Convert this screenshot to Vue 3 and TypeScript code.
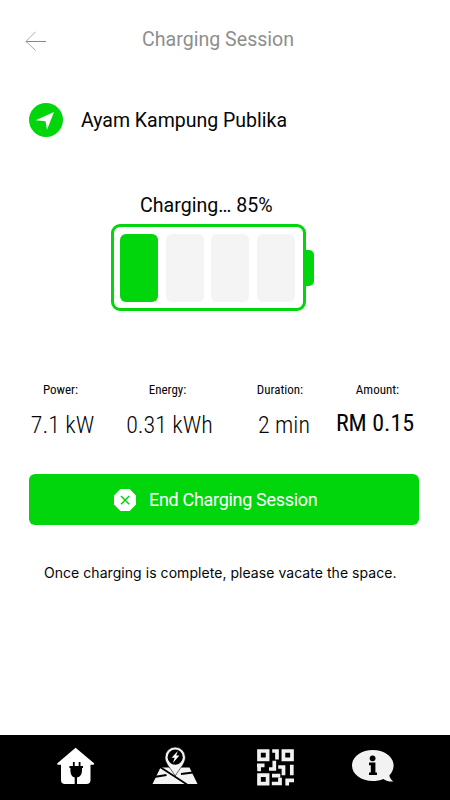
<script setup lang="ts">
interface Metric {
  id: string
  label: string
  value: string
}

const metrics: Metric[] = [
  { id: 'power', label: 'Power:', value: '7.1 kW' },
  { id: 'energy', label: 'Energy:', value: '0.31 kWh' },
  { id: 'duration', label: 'Duration:', value: '2 min' },
  { id: 'amount', label: 'Amount:', value: 'RM 0.15' },
]
const cells: boolean[] = [true, false, false, false]
</script>

<template>
  <div class="screen">
    <header class="header">
      <button class="back" aria-label="Back">
        <svg width="22" height="20" viewBox="0 0 22 20">
          <path d="M10.5 .8 1 10.4l9.5 9" fill="none" stroke="#aaa" stroke-width="1" />
          <path d="M1 10.5h20" stroke="#888" stroke-width="1" />
        </svg>
      </button>
      <h1 class="title">Charging Session</h1>
    </header>

    <section class="location">
      <svg width="34" height="34" viewBox="0 0 34 34">
        <circle cx="17" cy="17" r="17" fill="#00d60b" />
        <path d="M25 9 6.7 17.2l9.8 1 1.5 8.6Z" fill="#fff" />
      </svg>
      <span class="place">Ayam Kampung Publika</span>
    </section>

    <section class="status">
      <p class="percent">Charging… 85%</p>
      <div class="battery">
        <div class="shell">
          <span v-for="(on, i) in cells" :key="i" class="cell" :class="{ on }"></span>
        </div>
        <span class="tip"></span>
      </div>
    </section>

    <section class="metrics">
      <div v-for="m in metrics" :key="m.id" class="metric" :class="m.id">
        <span class="label">{{ m.label }}</span>
        <span class="value">{{ m.value }}</span>
      </div>
    </section>

    <button class="end">
      <svg width="22" height="22" viewBox="0 0 22 22">
        <path d="M6.4 0h9.2L22 6.4v9.2L15.6 22H6.4L0 15.6V6.4Z" fill="#fff" />
        <path d="m7 7 8.2 8.2M15.2 7 7 15.2" stroke="#00d60b" stroke-width="1.5" />
      </svg>
      <span class="end-text">End Charging Session</span>
    </button>

    <p class="notice">Once charging is complete, please vacate the space.</p>

    <nav class="nav">
      <svg class="home" width="38" height="38" viewBox="0 0 38 38">
        <path d="M18.6.8 37 16.3q.8 1.5-1 1.5h-2.5V33q0 4-4 4H20v-6.5q5-1 5-7V21h1v-2h-2.5v-4h-1.8v4h-4v-4h-1.8v4h-3.5v2h1v2.5q0 6 4.3 7V37H8q-4 0-4-4V17.8H1.4q-1.8 0-1-1.5Z" fill="#fff" />
      </svg>
      <svg class="map" width="46" height="38" viewBox="0 0 46 38">
        <path d="M8.5 20.5h29L45.5 37H.5Z" fill="#f4f4f4" />
        <path d="m8 20 15.5 10L35 37.5M2 30l12.5-2M29 27l12-1.5" fill="none" stroke="#000" stroke-width="1.8" />
        <path d="M23.2 29C19.5 22 13 17 13 10.3a10.2 10.2 0 0 1 20.4 0C33.4 17 27 22 23.2 29Z" fill="#f4f4f4" stroke="#000" stroke-width="0.6" />
        <circle cx="23.2" cy="10.2" r="7.6" />
        <path d="m25.8 4-6.2 6.8h3.1L20.9 16l6.5-7.4h-3.2Z" fill="#fff" />
      </svg>
      <svg class="qr" width="37" height="37" viewBox="0 0 37 37">
        <g fill="none" stroke="#f2f2f2" stroke-width="3.7">
          <path d="M2 2h8.6v8.4H2ZM26.4 2H35v8.4h-8.6ZM2 26.2h8.6v8.4H2Z" />
          <path d="M15.2 2H20v8.4M0 16.3h7.5M2.1 14.5v7.7M12 20h5.3v-8.3M21.2 18h5.3v8.2M34.8 15.8v10.4M15 26.6h8.3M14.8 34.5H23v-5.7M28.4 31.3H37M30.2 29.5v7" />
        </g>
      </svg>
      <svg class="info" width="42" height="34" viewBox="0 0 42 34">
        <path d="M20.8 0c11.5 0 20.8 6.7 20.8 15.5 0 3.8-1.6 7.2-4.2 9.8 0 2.3 1.8 4.6 4 6.2-4 .2-7.7-.8-10.2-2.6-3.1 1.4-6.4 2.1-10.4 2.1C9.3 31 0 24.3 0 15.5S9.3 0 20.8 0Z" fill="#f2f2f2" />
        <circle cx="20.6" cy="8.3" r="2.9" />
        <path d="M17 12.6h6.4v9.8H25v2.7h-8v-2.7h1.8v-7.1H17Z" />
      </svg>
    </nav>
  </div>
</template>

<style>
body {
  margin: 0;
  background: #fff;
}
</style>

<style scoped>
.screen {
  display: flex;
  flex-direction: column;
  box-sizing: border-box;
  width: 450px;
  height: 800px;
  overflow: hidden;
  background: #fff;
  color: #050505;
  font-family: Roboto, "Liberation Sans", sans-serif;
}
svg {
  display: block;
  flex: none;
}
button {
  border: 0;
  padding: 0;
  background: none;
  font-family: inherit;
}
.header {
  display: flex;
  align-items: center;
  height: 79px;
  padding-left: 25px;
}
.back {
  width: 22px;
  padding-top: 3px;
}
.title {
  margin: 1px 0 0 95px;
  color: #8e8e8e;
  font-size: 19.6px;
  font-weight: 400;
  line-height: 24px;
}
.location {
  display: flex;
  align-items: center;
  gap: 18px;
  height: 34px;
  margin: 24px 0 0 29px;
}
.place {
  font-size: 19.5px;
}
.status {
  margin-top: 57px;
}
.percent {
  margin: 0 0 0 140px;
  font-size: 19.6px;
  line-height: 24px;
}
.battery {
  display: flex;
  align-items: center;
  margin: 6px 0 0 111px;
}
.shell {
  display: flex;
  justify-content: space-between;
  box-sizing: border-box;
  width: 195px;
  height: 87px;
  padding: 7px 8px 6px 6px;
  border: 3px solid #00d60b;
  border-radius: 9px;
}
.cell {
  width: 38px;
  height: 68px;
  border-radius: 6px;
  background: #f4f4f4;
}
.cell.on {
  background: #00d60b;
}
.tip {
  width: 8px;
  height: 36px;
  border-radius: 0 5px 5px 0;
  background: #00d60b;
}
.metrics {
  display: grid;
  grid-template-columns: 110px 104px 118px 78px;
  height: 61px;
  margin: 71px 0 0 7px;
}
.metric {
  display: flex;
  flex-direction: column;
  align-items: center;
  white-space: nowrap;
  font-stretch: 75%;
}
.label {
  padding-right: 3px;
  font-size: 13px;
  line-height: 16px;
}
.value {
  margin-top: 13px;
  padding-left: 1px;
  font-size: 24px;
  font-weight: 300;
  line-height: 28px;
}
.duration .label {
  padding-right: 0;
}
.duration .value {
  padding-left: 8px;
}
.amount .label {
  padding-right: 1px;
}
.amount .value {
  margin-top: 11px;
  padding-left: 0;
  padding-right: 6px;
  font-weight: 400;
}
.end {
  display: flex;
  align-items: center;
  gap: 13px;
  width: 390px;
  height: 51px;
  margin: 31px 0 0 29px;
  padding-left: 85px;
  border-radius: 6px;
  background: #00d60b;
  color: #fff;
}
.end-text {
  font-size: 18px;
  letter-spacing: -0.31px;
}
.notice {
  margin: 39px 0 0 44px;
  font-family: Inter, sans-serif;
  font-size: 14px;
  letter-spacing: 0.05px;
  line-height: 18px;
  white-space: nowrap;
}
.nav {
  display: flex;
  align-items: flex-start;
  height: 65px;
  margin-top: auto;
  background: #000;
}
.home {
  margin: 12px 0 0 57px;
}
.map {
  margin: 12px 0 0 57px;
}
.qr {
  margin: 14px 0 0 59px;
}
.info {
  margin: 15px 0 0 58px;
}
</style>
